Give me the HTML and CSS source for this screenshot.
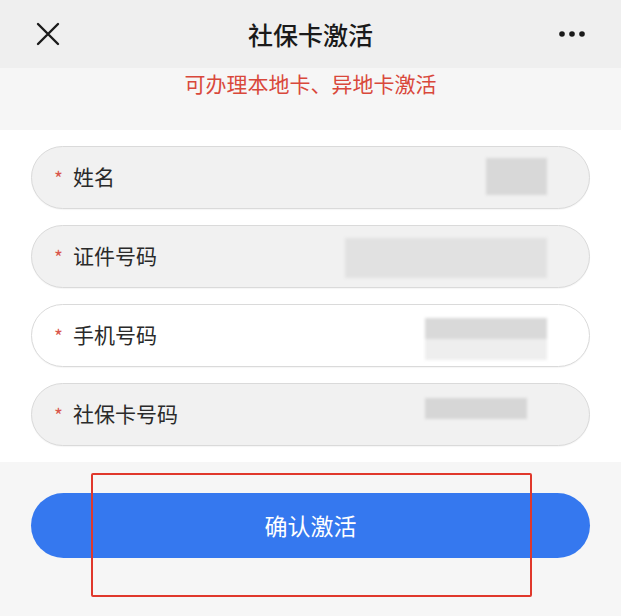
FILE: index.html
```html
<!DOCTYPE html>
<html lang="zh-CN">
<head>
<meta charset="utf-8">
<title>社保卡激活</title>
<link rel="stylesheet" href="styles.css">
</head>
<body>
<div class="page">
  <header class="topbar">
    <span class="close-btn">
      <svg width="24" height="24" viewBox="0 0 24 24"><path d="M2 2 L22 22 M22 2 L2 22" stroke="#1a1a1a" stroke-width="2.4" stroke-linecap="round" fill="none"/></svg>
    </span>
    <h1 class="title">社保卡激活</h1>
    <span class="more-btn">
      <svg width="28" height="8" viewBox="0 0 28 8"><circle cx="4" cy="4" r="2.8" fill="#1a1a1a"/><circle cx="14" cy="4" r="2.8" fill="#1a1a1a"/><circle cx="24" cy="4" r="2.8" fill="#1a1a1a"/></svg>
    </span>
  </header>
  <div class="notice">可办理本地卡、异地卡激活</div>
  <form class="form">
    <div class="field">
      <span class="req">*</span><span class="label">姓名</span>
      <span class="mask mask-name"></span>
    </div>
    <div class="field">
      <span class="req">*</span><span class="label">证件号码</span>
      <span class="mask mask-id"></span>
    </div>
    <div class="field field-active">
      <span class="req">*</span><span class="label">手机号码</span>
      <span class="mask mask-phone"></span>
    </div>
    <div class="field">
      <span class="req">*</span><span class="label">社保卡号码</span>
      <span class="mask mask-card"></span>
    </div>
  </form>
  <div class="footer">
    <button class="submit" type="button">确认激活</button>
    <div class="highlight"></div>
  </div>
</div>
</body>
</html>
```
FILE: styles.css
```css
* { box-sizing: border-box; }
html, body { margin: 0; padding: 0; }
body {
  font-family: "Noto Sans CJK SC", "Noto Sans", sans-serif;
  background: #f6f6f6;
  width: 621px;
  height: 616px;
  overflow: hidden;
}
.page { position: relative; width: 621px; height: 616px; display: flex; flex-direction: column; }
.topbar {
  height: 68px;
  background: #efefef;
  display: flex;
  align-items: center;
  justify-content: space-between;
  padding: 0 35px 0 36px;
  position: relative;
}
.close-btn { display: flex; width: 24px; height: 24px; }
.more-btn { display: flex; }
.title {
  position: absolute;
  left: 0; right: 0;
  margin: 0;
  text-align: center;
  font-size: 25px;
  font-weight: 500;
  color: #1a1a1a;
  line-height: 68px;
  pointer-events: none;
}
.notice {
  height: 62px;
  background: #f6f6f6;
  text-align: center;
  color: #d9483b;
  font-size: 21px;
  line-height: 30px;
  padding-top: 0;
}
.form {
  margin: 0;
  background: #ffffff;
  padding: 16px 31px;
  display: flex;
  flex-direction: column;
  gap: 16px;
}
.field {
  height: 63px;
  border: 1.5px solid #dadada;
  border-radius: 32px;
  background: #f1f1f1;
  display: flex;
  align-items: center;
  padding: 0 0 4px 22px;
  position: relative;
  box-shadow: 0 1px 1px rgba(0,0,0,0.04);
}
.field-active { background: #ffffff; }
.req { color: #d9574b; font-size: 19px; width: 19px; padding-top: 4px; }
.label { color: #2a2a2a; font-size: 21px; }
.mask {
  position: absolute;
  background: #dcdcdc;
  filter: blur(1.5px);
}
.mask-name { left: 454px; top: 11px; width: 61px; height: 37px; background: #d8d8d8; }
.mask-id { left: 313px; top: 12px; width: 202px; height: 40px; background: #e1e1e1; }
.mask-phone {
  left: 393px; top: 13px; width: 122px; height: 42px;
  background: linear-gradient(#d9d9d9 0, #d9d9d9 50%, #eeeeee 50%, #eeeeee 100%);
}
.mask-card { left: 393px; top: 14px; width: 102px; height: 21px; background: #d6d6d6; }
.footer {
  flex: 1;
  background: #f6f6f6;
  padding: 31px 31px 0;
  position: relative;
}
.submit {
  width: 100%;
  height: 65px;
  border: 0;
  border-radius: 33px;
  background: #3578ef;
  color: #ffffff;
  font-family: "Noto Sans CJK SC", "Noto Sans", sans-serif;
  font-size: 23px;
  display: block;
  padding-bottom: 3px;
}
.highlight {
  position: absolute;
  left: 91px;
  top: 11px;
  width: 441px;
  height: 124px;
  border: 2px solid #e0382c;
  border-radius: 2px;
}
```
